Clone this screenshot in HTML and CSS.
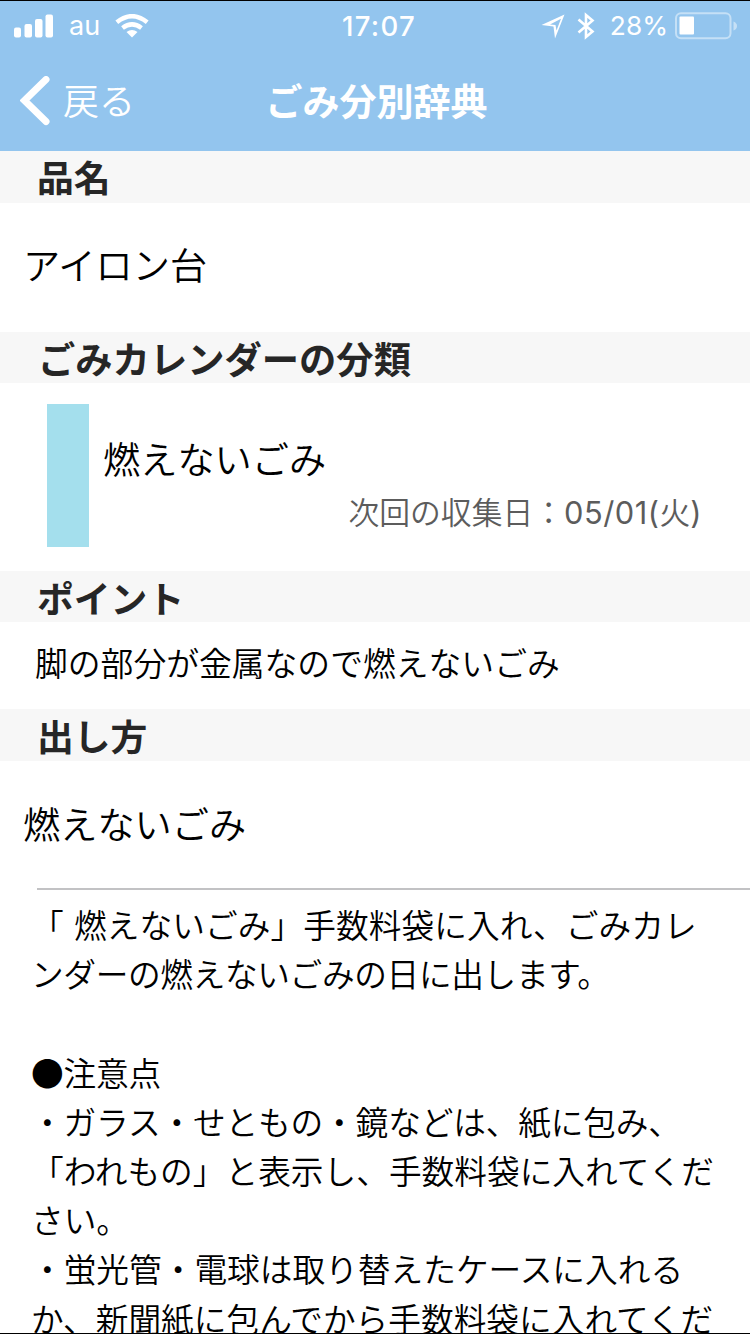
FILE: index.html
```html
<!DOCTYPE html>
<html lang="ja">
<head>
<meta charset="utf-8">
<title>ごみ分別辞典</title>
<link rel="stylesheet" href="styles.css">
</head>
<body>
<div class="screen">
  <header class="top">
    <div class="status">
      <div class="status-left">
        <svg class="signal" width="40" height="24" viewBox="0 0 40 24" fill="#fff"><rect x="0" y="13.5" width="7" height="10" rx="2"/><rect x="10.5" y="10" width="7.5" height="13.500" rx="2"/><rect x="21" y="5" width="7.500" height="18.500" rx="2"/><rect x="31.500" y="0.500" width="7.500" height="23" rx="2"/></svg>
        <span class="carrier">au</span>
        <svg class="wifi" width="34" height="24" viewBox="0 0 34 24" fill="none" stroke="#fff" stroke-width="4.500"><path d="M1.800 8.300Q17-3.900 32.200 8.300"/><path d="M7.500 14Q17 6.800 26.500 14"/><path d="M11.500 18Q17 14 22.500 18L17 23.500z" fill="#fff" stroke="none"/></svg>
      </div>
      <div class="clock">17:07</div>
      <div class="status-right">
        <svg width="24" height="26" viewBox="0 0 24 26"><path fill="#fff" fill-rule="evenodd" d="M0.500 12L23.500 1.500L14 25.500L12.500 13.500zM9 11.500L14.500 12L15.500 17.500L20 5.800z"/></svg>
        <svg class="bt" width="18" height="28" viewBox="0 0 18 28" fill="none" stroke="#fff" stroke-width="2.600"><path d="M1.500 7.500L15.500 19.500L9 25V3L15.500 8.500L1.500 20.500"/></svg>
        <span class="percent">28%</span>
        <svg class="battery" width="64" height="28" viewBox="0 0 64 28"><rect x="1" y="1.200" width="54.500" height="25" rx="5" fill="none" stroke="#c5e0f6" stroke-width="2"/><rect x="4.500" y="4.500" width="14.500" height="18" rx="1" fill="#fff"/><path d="M58.500 9.500Q62 11 62 14T58.500 18.500z" fill="#c5e0f6"/></svg>
      </div>
    </div>
    <nav class="nav">
      <div class="back">
        <svg width="30" height="50" viewBox="0 0 30 50" fill="none" stroke="#fff" stroke-width="7"><path d="M26 3.500L4.500 24.500L26 45.500" stroke-linecap="round"/></svg>
        <span>戻る</span>
      </div>
      <h1 class="title">ごみ分別辞典</h1>
      <div></div>
    </nav>
  </header>
  <h2 class="heading first">品名</h2>
  <p class="item name">アイロン台</p>
  <h2 class="heading wide">ごみカレンダーの分類</h2>
  <div class="category">
    <div class="swatch"></div>
    <div class="category-text">
      <p class="category-name">燃えないごみ</p>
      <p class="next">次回の収集日：<span class="date">05/01(</span>火<span class="date">)</span></p>
    </div>
  </div>
  <h2 class="heading">ポイント</h2>
  <p class="point">脚の部分が金属なので燃えないごみ</p>
  <h2 class="heading last">出し方</h2>
  <p class="item method">燃えないごみ</p>
  <div class="rule"></div>
  <div class="detail">
    <div class="line spaced">「 燃えないごみ」手数料袋に入れ、ごみカレ</div>
    <div class="line tight">ンダーの燃えないごみの日に出します。</div>
    <div class="line"></div>
    <div class="line snug">●注意点</div>
    <div class="line snug">・ガラス・せともの・鏡などは、紙に包み、</div>
    <div class="line">「われもの」と表示し、手数料袋に入れてくだ</div>
    <div class="line">さい。</div>
    <div class="line">・蛍光管・電球は取り替えたケースに入れる</div>
    <div class="line">か、新聞紙に包んでから手数料袋に入れてくだ</div>
  </div>
</div>
</body>
</html>
```
FILE: styles.css
```css
* { box-sizing: border-box; }
body { margin: 0; background: #fff; color: #000; font-family: "Noto Sans CJK JP", sans-serif; font-weight: 350; }
h1, h2, p { margin: 0; }
svg { display: block; flex: none; }
.screen { height: 1334px; overflow: hidden; display: flex; flex-direction: column; border-top: 1px solid #000; border-bottom: 1px solid #000; }
.screen > * { flex: none; }
.top { height: 150px; background: #93c5ee; color: #fff; }
.status { height: 50px; display: grid; grid-template-columns: 1fr auto 1fr; align-items: center; padding: 0 11px 0 14px; font-family: Inter, sans-serif; font-size: 26px; line-height: 50px; font-weight: 400; }
.status-left, .status-right { display: flex; align-items: center; }
.status-right { justify-content: flex-end; }
.carrier { margin: 0 15px 0 15px; font-size: 27px; }
.clock { font-size: 27.500px; font-weight: 500; letter-spacing: 1.300px; padding-left: 5px; }
.bt { margin: 0 15px 0 12px; }
.percent { font-size: 26.300px; }
.battery { margin-left: 7px; }
.nav { height: 100px; display: grid; grid-template-columns: 1fr auto 1fr; align-items: center; }
.back { display: flex; align-items: center; padding-left: 20px; gap: 13px; font-size: 36px; line-height: 50px; }
.back span { padding-bottom: 4px; }
.title { padding: 0 0 3px 3px; font-size: 37px; line-height: 50px; font-weight: 600; }
.heading { height: 51px; padding-left: 37px; background: #f7f7f7; color: #262626; font-size: 36.800px; line-height: 53px; font-weight: 700; }
.first { height: 52px; line-height: 51px; }
.wide { padding-left: 38px; font-size: 37.300px; }
.last { height: 52px; }
.item { padding-left: 23px; font-size: 37.200px; }
.name { height: 129px; line-height: 122px; }
.category { height: 188px; display: flex; padding: 21px 48px 24px 47px; gap: 14px; }
.swatch { width: 42px; height: 143px; background: #a4dfed; }
.category-text { flex: 1; padding-top: 28px; }
.category-name { font-size: 37.200px; line-height: 52px; }
.next { color: #5c5c5c; text-align: right; font-size: 30.800px; line-height: 53px; }
.date { font-family: Inter, sans-serif; font-weight: 400; letter-spacing: 0.500px; }
.point { height: 87px; padding-left: 35px; font-size: 32.800px; line-height: 79px; }
.method { height: 127px; line-height: 125px; }
.rule { height: 2px; margin-left: 37px; background: #c2c2c4; }
.detail { padding: 9px 0 0 31px; font-size: 32.700px; line-height: 49.200px; white-space: nowrap; }
.line { height: 49.200px; }
.spaced { word-spacing: 3px; letter-spacing: 0.060px; }
.tight { letter-spacing: -0.360px; }
.snug { letter-spacing: -0.160px; }
```
